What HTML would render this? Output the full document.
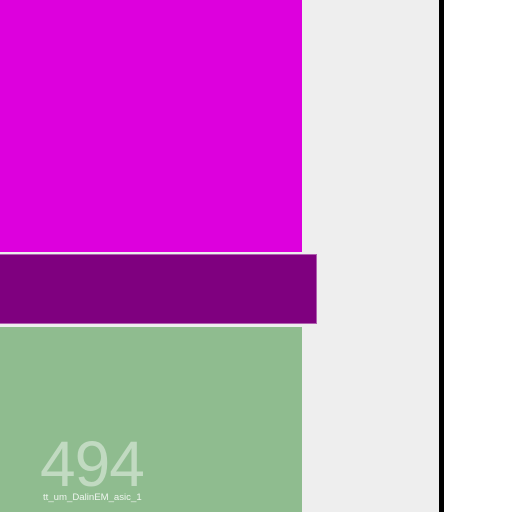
<!DOCTYPE html>
<html><head><style>
body{margin:0;width:512px;height:512px;position:relative;overflow:hidden;background:#fff;font-family:"Liberation Sans",sans-serif}
div{position:absolute}
</style></head><body>
<div style="left:0;top:0;width:439px;height:512px;background:#eeeeee"></div>
<div style="left:439px;top:0;width:5px;height:512px;background:#000"></div>
<div style="left:0;top:0;width:302px;height:252px;background:#dd00dd"></div>
<div style="left:0;top:255px;width:316px;height:68px;background:#7f007f;box-shadow:0 0 0 1px #b060b0"></div>
<div style="left:0;top:327px;width:302px;height:185px;background:#8fbc8f"></div>
<div style="left:40px;top:430px;font-size:64px;line-height:68px;letter-spacing:-1px;color:rgba(255,255,255,0.45)">494</div>
<div style="left:43px;top:492px;font-size:9.6px;line-height:12px;color:rgba(255,255,255,0.85)">tt_um_DalinEM_asic_1</div>
</body></html>
